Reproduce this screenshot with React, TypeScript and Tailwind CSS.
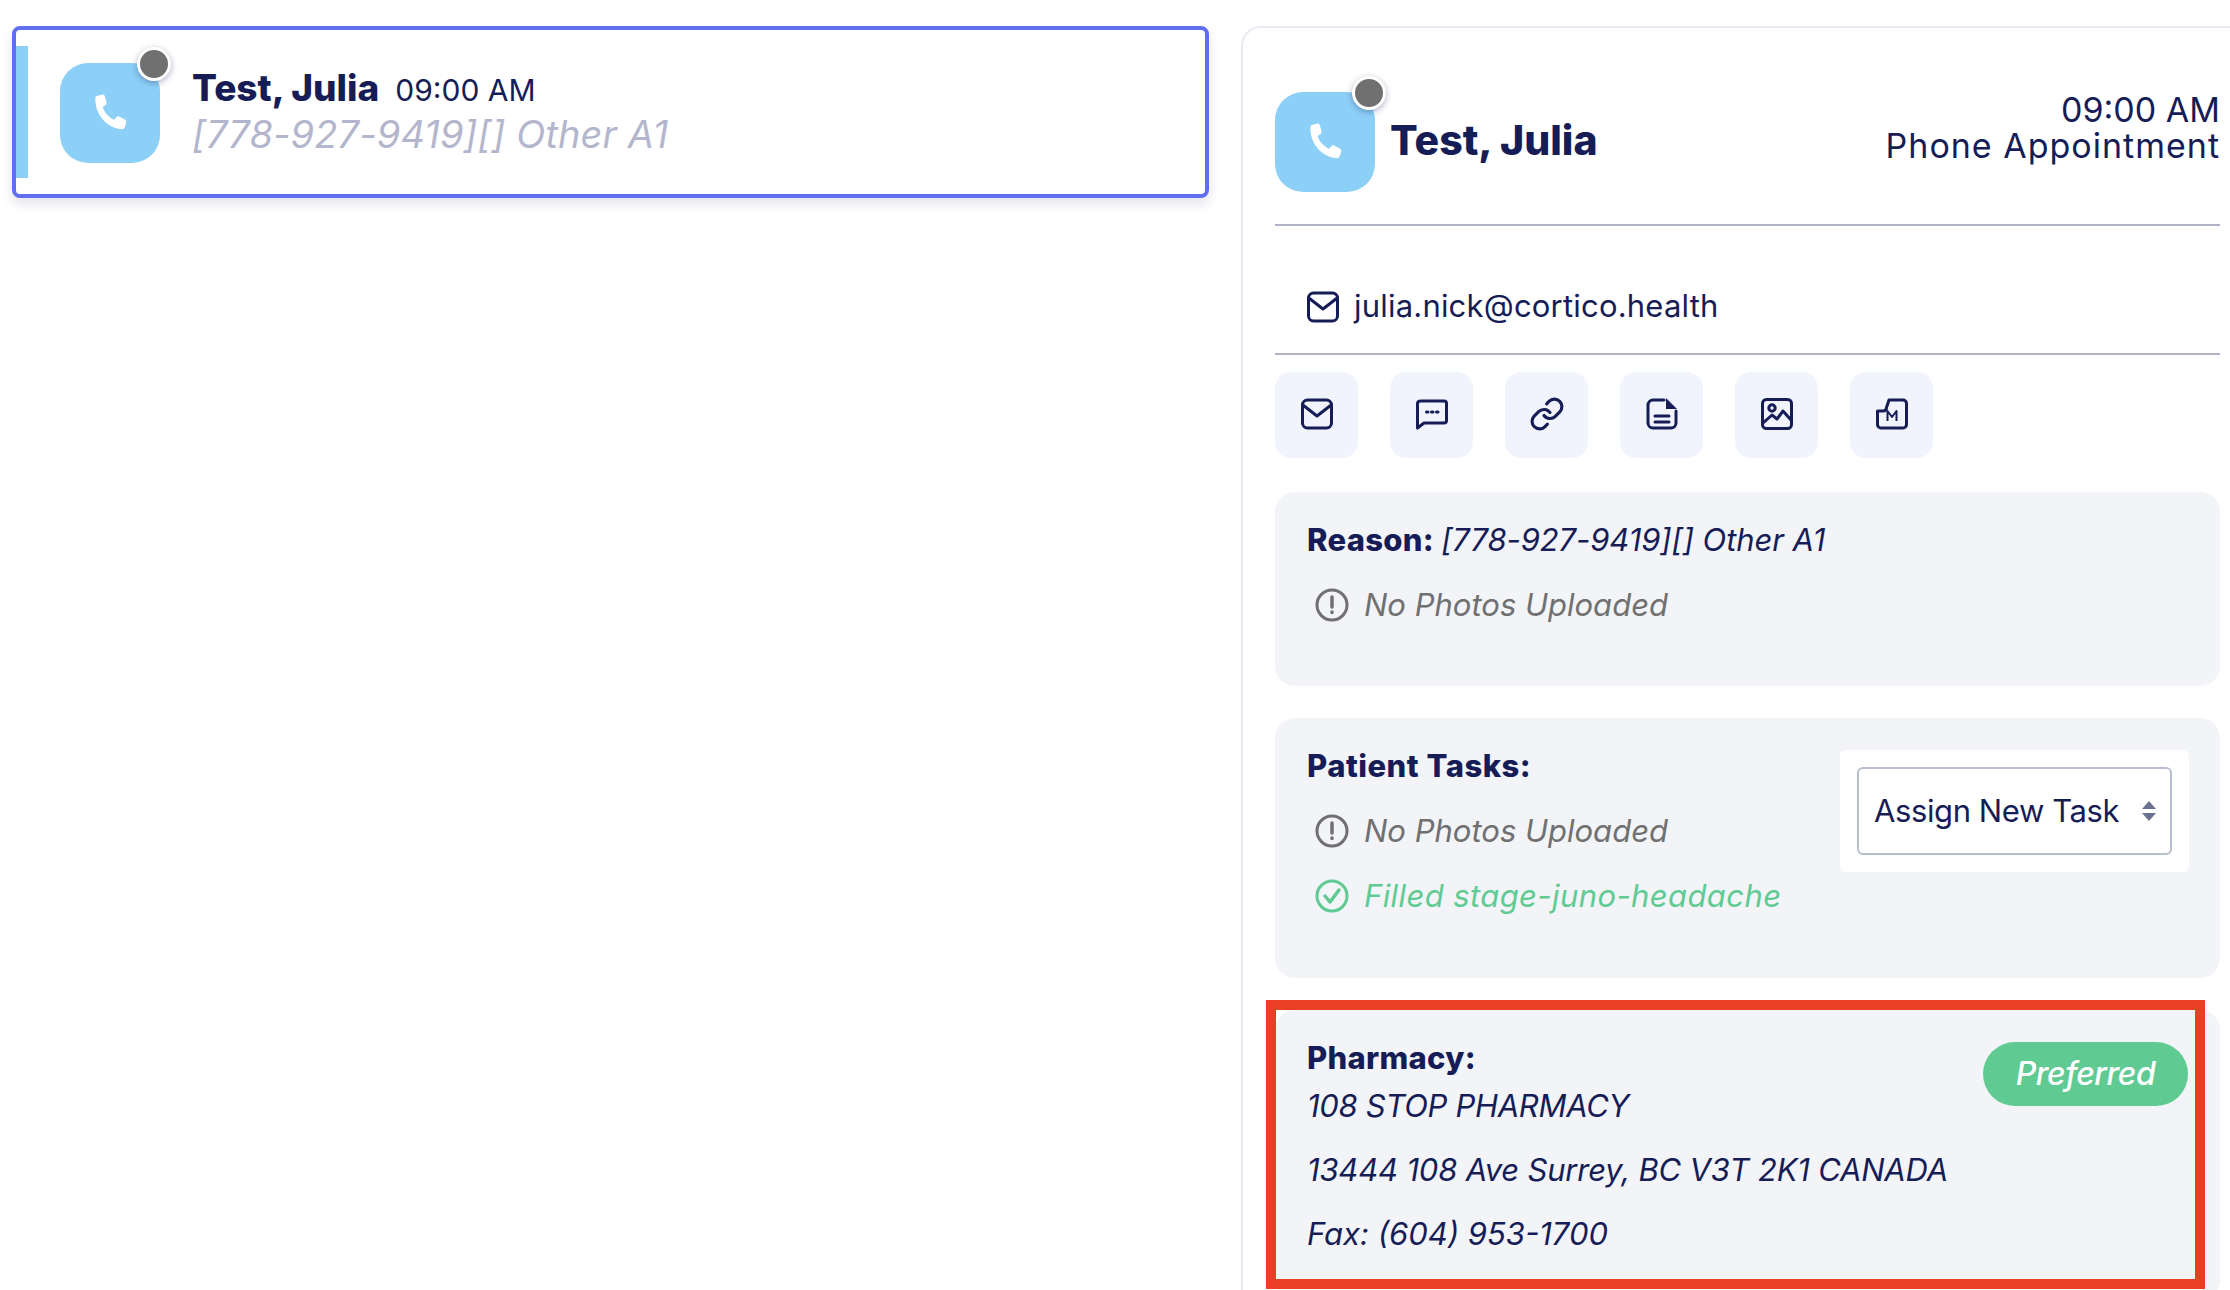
const navy = "text-[#161d56]"

const PhoneIcon = ({ className }: { className: string }) => (
    <svg viewBox="0 0 24 24" className={className} fill="#fff">
        <path d="M5.200 2.600 7.600 2c.7-.2 1.400.2 1.600.9l.9 3.200c.2.600 0 1.200-.5 1.500L8 8.700c.9 3 3.200 5.600 6.200 7l1.300-1.400c.4-.5 1.100-.6 1.700-.3l2.900 1.600c.6.300.9 1 .7 1.600l-.7 2.500c-.2.800-1 1.300-1.800 1.200C10 20.200 3.800 12.700 4 4c0-.6.500-1.200 1.200-1.400Z" />
    </svg>
)

const Avatar = () => (
    <div className="relative w-[100px] h-[100px] shrink-0 rounded-[28px] bg-[#8dd0f7] flex items-center justify-center">
        <PhoneIcon className="w-[44px] h-[44px]" />
        <div className="absolute right-[-11px] top-[-16px] w-[34px] h-[34px] rounded-full bg-[#707070] border-[3px] border-white shadow-[0_2px_6px_rgba(22,29,86,0.35)]" />
    </div>
)

const MailIcon = () => (
    <svg viewBox="0 0 32 32" className="w-8 h-8" fill="none" stroke="#161d56" strokeWidth="3" strokeLinejoin="round" strokeLinecap="round">
        <rect x="1.500" y="2" width="29" height="28" rx="5" />
        <path d="M2.500 7.500 16 18 29.500 7.500" />
    </svg>
)

const ChatIcon = () => (
    <svg viewBox="0 0 32 32" className="w-8 h-8" fill="none" stroke="#161d56" strokeWidth="3" strokeLinejoin="round">
        <path d="M5 3h23c1.500 0 2.500 1 2.500 2.500v17c0 1.500-1 2.500-2.500 2.500H8l-6.500 5V5.500C1.500 4 3 3 5 3Z" />
        <path d="M10.500 14h1.500M15.500 14H17M20.500 14H22" strokeLinecap="round" />
    </svg>
)

const LinkIcon = () => (
    <svg viewBox="0 0 24 24" className="w-9 h-9" fill="none" stroke="#161d56" strokeWidth="2.100" strokeLinecap="round" strokeLinejoin="round">
        <path d="M10 13a5 5 0 0 0 7.540.54l3-3a5 5 0 0 0-7.070-7.070l-1.720 1.710" />
        <path d="M14 11a5 5 0 0 0-7.540-.54l-3 3a5 5 0 0 0 7.070 7.070l1.710-1.710" />
    </svg>
)

const DocIcon = () => (
    <svg viewBox="0 0 32 32" className="w-8 h-8" fill="none" stroke="#161d56" strokeWidth="3" strokeLinejoin="round" strokeLinecap="round">
        <path d="M18 2H7a5 5 0 0 0-5 5v18a5 5 0 0 0 5 5h18a5 5 0 0 0 5-5V13" />
        <path d="M20 0l11 11H20Z" fill="#161d56" stroke="none" />
        <path d="M9 18h14M9 24h14" />
    </svg>
)

const ImageIcon = () => (
    <svg viewBox="0 0 32 32" className="w-8 h-8" fill="none" stroke="#161d56" strokeWidth="3" strokeLinejoin="round">
        <rect x="1.500" y="1.500" width="29" height="29" rx="4" />
        <circle cx="11" cy="10" r="3.200" />
        <path d="M2 25l9-8 5 4 6-8 8 9" />
    </svg>
)

const MemoIcon = () => (
    <svg viewBox="0 0 32 32" className="w-8 h-8" fill="none" stroke="#161d56" strokeWidth="3" strokeLinejoin="round">
        <path d="M13 2h14a3.500 3.500 0 0 1 3.500 3.500v21A3.500 3.500 0 0 1 27 30H5a3.500 3.500 0 0 1-3.500-3.500V13H7c2.500 0 3.500-1 3.500-3.500Z" />
        <path d="M11.500 23v-10l4.500 6 4.500-6v10" strokeWidth="2" />
    </svg>
)

const AlertIcon = () => (
    <svg viewBox="0 0 34 34" className="w-[34px] h-[34px] shrink-0" fill="none" stroke="#707070" strokeWidth="3" strokeLinecap="round">
        <circle cx="17" cy="17" r="15" />
        <path d="M17 9v10M17 24v.5" strokeWidth="3.500" />
    </svg>
)

const CheckIcon = () => (
    <svg viewBox="0 0 34 34" className="w-[34px] h-[34px] shrink-0" fill="none" stroke="#5fcb93" strokeWidth="3" strokeLinecap="round" strokeLinejoin="round">
        <circle cx="17" cy="17" r="15" />
        <path d="M10 17l5 6 9-12" strokeWidth="3.500" />
    </svg>
)

const actions = [<MailIcon />, <ChatIcon />, <LinkIcon />, <DocIcon />, <ImageIcon />, <MemoIcon />]

const StatusRow = ({ icon, text, className }: { icon: React.ReactNode; text: string; className: string }) => (
    <div className="flex items-center gap-[14px] pl-[8px] h-[34px]">
        {icon}
        <span className={`ml-[1px] text-[31px] italic ${className}`}>{text}</span>
    </div>
)

export default function App() {
    return (
        <div className={`relative w-[2230px] h-[1290px] overflow-hidden bg-white flex items-start pt-[26px] pl-[12px] font-['Inter',sans-serif] ${navy}`}>
            <div className="w-[1197px] h-[172px] shrink-0 border-4 border-[#5f6ff0] rounded-[8px] bg-white shadow-[0_6px_12px_rgba(22,29,86,0.12)] flex items-center py-[16px]">
                <div className="w-3 h-full bg-[#8dd0f7]" />
                <div className="ml-[32px] mt-[1px]">
                    <Avatar />
                </div>
                <div className="ml-[32px] flex flex-col -mt-[3px]">
                    <div className="flex items-baseline gap-4 leading-[44px]">
                        <span className="text-[37px] font-extrabold">Test, Julia</span>
                        <span className="text-[30px]">09:00 AM</span>
                    </div>
                    <span className="text-[38px] italic leading-[44px] text-[#b3b6cd] tracking-[0.1px]">[778-927-9419][] Other A1</span>
                </div>
            </div>

            <div className="ml-[32px] flex-1 h-[1300px] border-l-2 border-t-2 border-[#e9e9f1] rounded-tl-[20px] pl-[32px] pr-[10px] flex flex-col">
                <div className="h-[198px] border-b-2 border-[#b0b3c6] flex items-start pt-[64px]">
                    <Avatar />
                    <span className="ml-[15px] mt-[20px] text-[41px] leading-[56px] font-extrabold">Test, Julia</span>
                    <div className="ml-auto flex flex-col items-end text-[34px] leading-[36px]">
                        <span>09:00 AM</span>
                        <span className="tracking-[1px]">Phone Appointment</span>
                    </div>
                </div>
                <div className="h-[129px] border-b-2 border-[#b0b3c6] flex items-center gap-[15px] pl-[32px] pt-[34px]">
                    <MailIcon />
                    <span className="text-[31px] tracking-[0.2px]">julia.nick@cortico.health</span>
                </div>
                <div className="flex gap-[32px] mt-[17px]">
                    {actions.map((icon, i) => (
                        <div key={i} className="w-[83px] h-[86px] rounded-[16px] bg-[#f1f4fd] flex items-center justify-center pb-[2px]">
                            {icon}
                        </div>
                    ))}
                </div>

                <div className="mt-[34px] h-[194px] rounded-[20px] bg-[#f2f4f8] pl-[32px] pt-[29px] flex flex-col gap-[29px]">
                    <p className="text-[31px] leading-[38px]">
                        <b className="font-extrabold tracking-[0.3px]">Reason: </b>
                        <i className="tracking-[-0.1px]">[778-927-9419][] Other A1</i>
                    </p>
                    <StatusRow icon={<AlertIcon />} text="No Photos Uploaded" className="text-[#707070]" />
                </div>

                <div className="mt-[32px] h-[260px] rounded-[20px] bg-[#f2f4f8] pl-[32px] pr-[31px] pt-[29px] flex justify-between items-start">
                    <div className="flex flex-col gap-[29px]">
                        <b className="text-[31px] leading-[38px] font-extrabold tracking-[0.5px]">Patient Tasks:</b>
                        <StatusRow icon={<AlertIcon />} text="No Photos Uploaded" className="text-[#707070]" />
                        <div className="mt-[2px]">
                            <StatusRow icon={<CheckIcon />} text="Filled stage-juno-headache" className="text-[#5fcb93] tracking-[0.4px]" />
                        </div>
                    </div>
                    <div className="mt-[3px] w-[349px] h-[122px] rounded-[6px] bg-white flex items-center justify-center">
                        <div className="w-[315px] h-[88px] border-2 border-[#b9bdd0] rounded-[6px] bg-white flex items-center justify-between pl-[15px] pr-[12px]">
                            <span className="text-[31px] tracking-[-0.4px]">Assign New Task</span>
                            <svg viewBox="0 0 16 22" className="w-[18px] h-[22px]" fill="#6b7190">
                                <path d="M8 1l7 8H1ZM8 21l-7-8h14Z" />
                            </svg>
                        </div>
                    </div>
                </div>

                <div className="relative mt-[32px] h-[290px] rounded-[20px] bg-[#f2f4f8] pl-[32px] pr-[32px] pt-[29px] flex justify-between items-start">
                    <div className="flex flex-col text-[31px] italic">
                        <b className="not-italic leading-[38px] font-extrabold tracking-[0.3px]">Pharmacy:</b>
                        <span className="leading-[38px] mt-[10px] tracking-[-0.3px]">108 STOP PHARMACY</span>
                        <span className="leading-[38px] mt-[26px] tracking-[-0.2px]">13444 108 Ave Surrey, BC V3T 2K1 CANADA</span>
                        <span className="leading-[38px] mt-[26px]">Fax: (604) 953-1700</span>
                    </div>
                    <div className="mt-[3px] w-[205px] h-[64px] rounded-full bg-[#5fcb93] text-white text-[32px] italic font-medium flex items-center justify-center tracking-[-0.5px]">Preferred</div>
                </div>
            </div>

            <div className="absolute left-[1266px] top-[1000px] w-[939px] h-[289px] border-[10px] border-[#e94025]" />
        </div>
    )
}
